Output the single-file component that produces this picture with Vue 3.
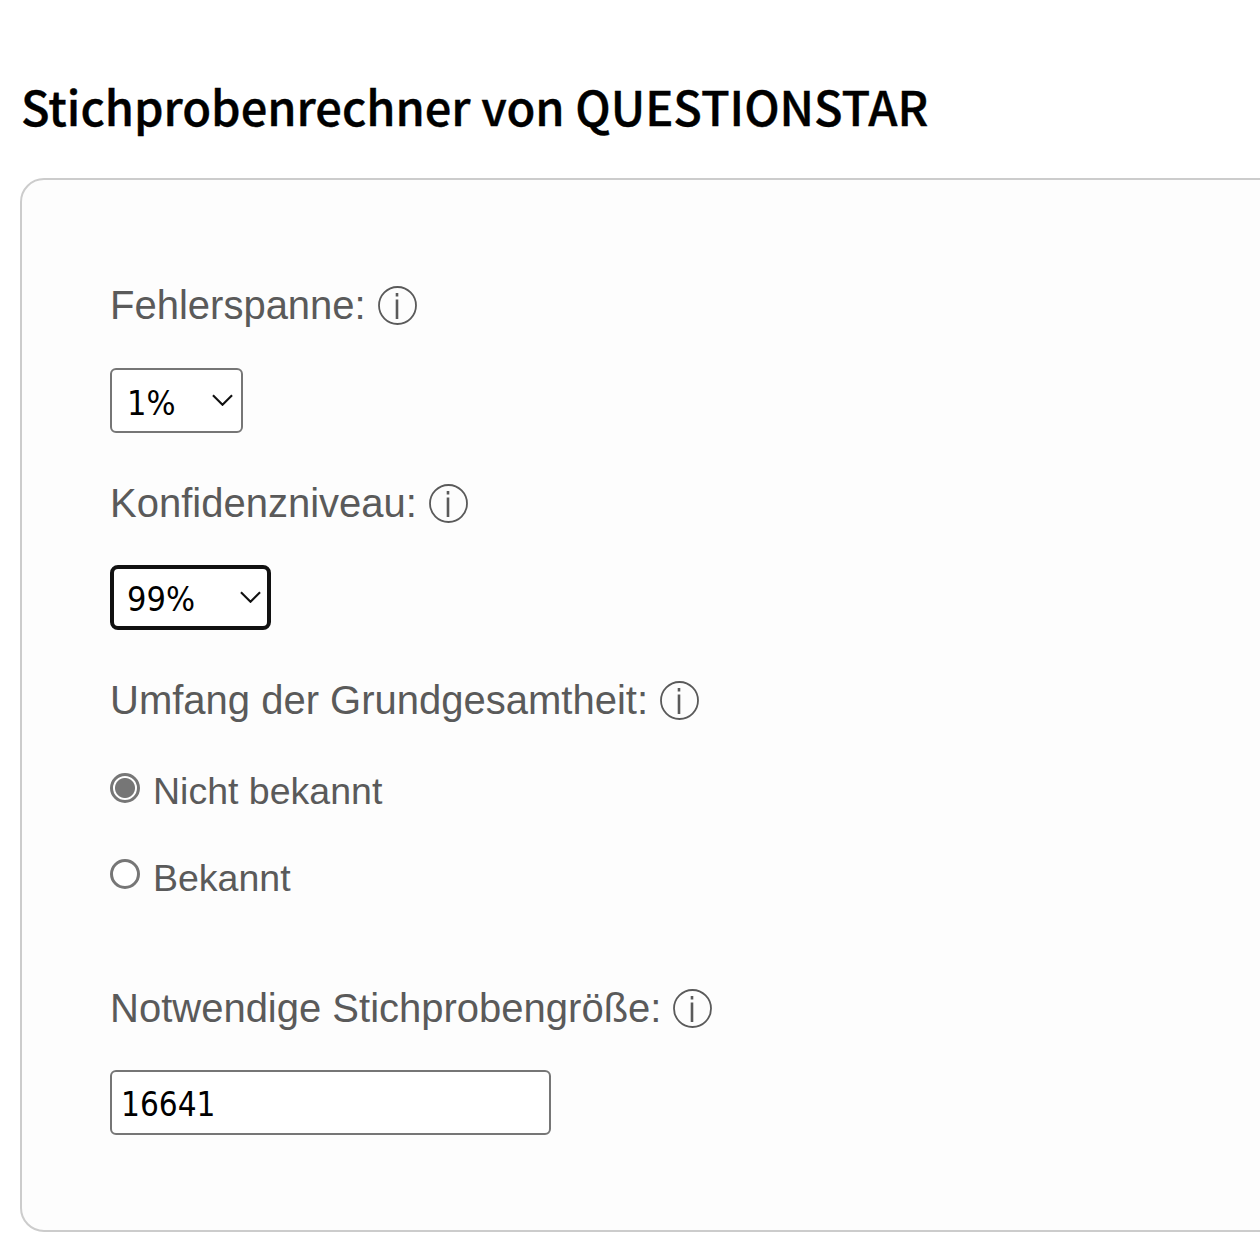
<template>
  <div class="page">
    <h1 class="title">Stichprobenrechner von QUESTIONSTAR</h1>
    <form class="card" @submit.prevent>
      <div class="label">
        <span>Fehlerspanne:</span>
        <svg class="info" viewBox="0 0 39 39"><circle cx="19.5" cy="19.5" r="18.5" /><path d="M19 13.5V33M19 7v3.5" /></svg>
      </div>
      <div class="select-wrap margin-select">
        <select v-model="margin" class="select">
          <option v-for="m in margins" :key="m">{{ m }}</option>
        </select>
        <svg class="chevron" viewBox="0 0 22 12"><path d="M1 1l10 10L21 1" /></svg>
      </div>

      <div class="label">
        <span>Konfidenzniveau:</span>
        <svg class="info" viewBox="0 0 39 39"><circle cx="19.5" cy="19.5" r="18.5" /><path d="M19 13.5V33M19 7v3.5" /></svg>
      </div>
      <div class="select-wrap level-select">
        <select v-model="level" class="select focused">
          <option v-for="l in levels" :key="l">{{ l }}</option>
        </select>
        <svg class="chevron" viewBox="0 0 22 12"><path d="M1 1l10 10L21 1" /></svg>
      </div>

      <div class="label">
        <span>Umfang der Grundgesamtheit:</span>
        <svg class="info" viewBox="0 0 39 39"><circle cx="19.5" cy="19.5" r="18.5" /><path d="M19 13.5V33M19 7v3.5" /></svg>
      </div>
      <label class="radio">
        <input v-model="known" type="radio" name="known" value="no" />
        <span>Nicht bekannt</span>
      </label>
      <label class="radio">
        <input v-model="known" type="radio" name="known" value="yes" />
        <span>Bekannt</span>
      </label>

      <div class="label result-label">
        <span>Notwendige Stichprobengröße:</span>
        <svg class="info" viewBox="0 0 39 39"><circle cx="19.5" cy="19.5" r="18.5" /><path d="M19 13.5V33M19 7v3.5" /></svg>
      </div>
      <input class="result" type="text" value="16641" />
    </form>
  </div>
</template>

<script setup>
import { ref } from 'vue'

const margins = ['1%', '2%', '3%', '5%']
const levels = ['90%', '95%', '99%']
const margin = ref('1%')
const level = ref('99%')
const known = ref('no')
</script>

<style>
html, body {
  overflow: hidden;
  background: #fff;
}
</style>

<style scoped>
.page {
  height: 1252px;
  padding: 71px 0 0 20px;
  box-sizing: border-box;
  font-family: "Liberation Sans", Arial, sans-serif;
}

.title {
  margin: 0 0 37px 1px;
  font-family: "Noto Sans CJK JP", "Noto Sans", sans-serif;
  font-size: 47px;
  font-weight: 500;
  line-height: 70px;
  color: #000;
  -webkit-text-stroke: 0.4px #000;
}

.card {
  width: 1400px;
  height: 1054px;
  box-sizing: border-box;
  padding: 104px 0 0 88px;
  background: #fdfdfd;
  border: 2px solid #ccc;
  border-radius: 24px;
}

.label {
  display: flex;
  align-items: center;
  gap: 12px;
  height: 42px;
  font-size: 40px;
  color: #5a5a5a;
}

.info {
  width: 39px;
  height: 39px;
  flex: none;
  fill: none;
  stroke: #5a5a5a;
  stroke-width: 1.8;
}

.info path {
  stroke-width: 2.6;
}

.select-wrap {
  position: relative;
  height: 65px;
  margin: 42px 0 49px;
}

.margin-select { width: 133px; }

.level-select {
  width: 161px;
  margin-top: 41px;
}

.select {
  width: 100%;
  height: 100%;
  box-sizing: border-box;
  padding: 4px 0 0 15px;
  appearance: none;
  font-family: "DejaVu Sans", sans-serif;
  font-stretch: condensed;
  font-size: 34px;
  color: #000;
  background: #fff;
  border: 2px solid #767676;
  border-radius: 6px;
}

.select.focused {
  padding: 2px 0 0 13px;
  border: 4px solid #111;
  border-radius: 8px;
}

.chevron {
  position: absolute;
  top: 26px;
  right: 10px;
  width: 21px;
  height: 12px;
  fill: none;
  stroke: #111;
  stroke-width: 2.2;
  pointer-events: none;
}

.radio {
  display: flex;
  align-items: center;
  gap: 13px;
  height: 87px;
  font-size: 37.5px;
  color: #5a5a5a;
}

.radio:first-of-type {
  margin-top: 27px;
}

.radio input {
  width: 30px;
  height: 30px;
  margin: -8px 0 0;
  appearance: none;
  background: #fff;
  border: 3px solid #767676;
  border-radius: 50%;
}

.radio + .radio input {
  margin-top: -10px;
}

.radio input:checked {
  background: radial-gradient(circle, #767676 0 9.5px, #fff 10.5px);
}

.result-label {
  margin-top: 65px;
}

.result {
  display: block;
  width: 441px;
  height: 65px;
  margin-top: 41px;
  box-sizing: border-box;
  padding: 4px 9px 0;
  font-family: "DejaVu Sans", sans-serif;
  font-stretch: condensed;
  font-size: 33px;
  color: #000;
  background: #fff;
  border: 2px solid #767676;
  border-radius: 6px;
  outline: none;
}
</style>
